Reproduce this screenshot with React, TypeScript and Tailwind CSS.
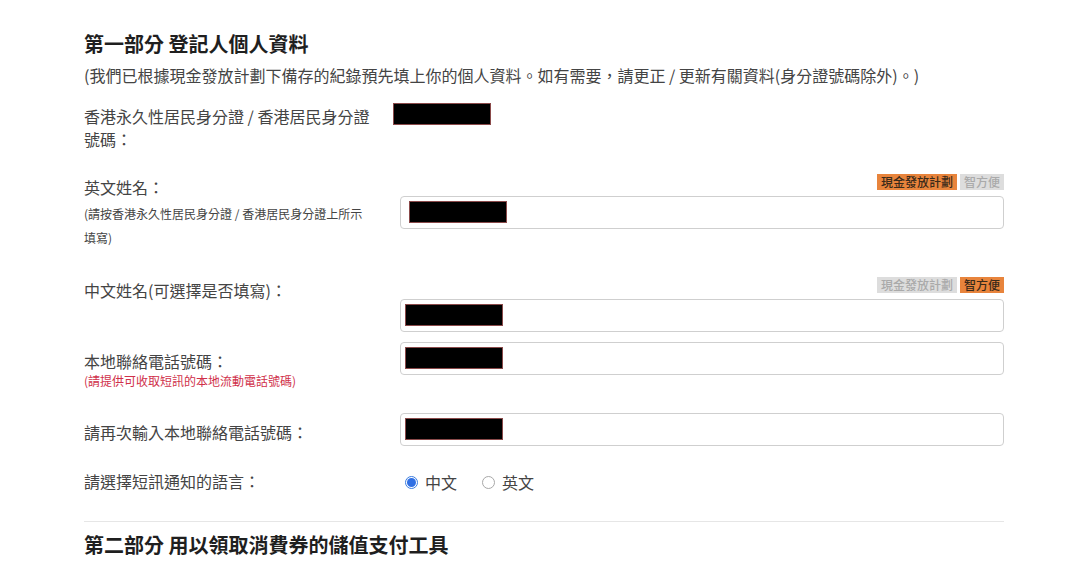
import React from "react";

const font = { fontFamily: '"Noto Sans CJK TC", "Noto Sans", sans-serif' };

function Redact({ className = "" }: { className?: string }) {
  return <div className={"h-[22px] w-[98px] bg-black border border-[#8a4a4a] " + className} />;
}

function Input({ offset = "ml-[4px]", top = "mt-[4px]" }: { offset?: string; top?: string }) {
  return (
    <div className="h-[33px] w-full rounded-[4px] border border-[#cfcfcf] bg-white">
      <Redact className={offset + " " + top} />
    </div>
  );
}

function Badges({ active }: { active: 0 | 1 }) {
  const on = "bg-[#e8843c] text-[#3a2a1a]";
  const off = "bg-[#dddddd] text-[#aaaaaa]";
  return (
    <div className="flex justify-end gap-[3px] h-[16px] mb-[6px]">
      <span className={"px-[4px] text-[12px] leading-[16px] font-medium " + (active === 0 ? on : off)}>現金發放計劃</span>
      <span className={"px-[4px] text-[12px] leading-[16px] font-medium " + (active === 1 ? on : off)}>智方便</span>
    </div>
  );
}

function Radio({ checked, label }: { checked: boolean; label: string }) {
  return (
    <div className="flex items-center gap-[7px]">
      {checked ? (
        <span className="w-[13px] h-[13px] rounded-full border border-[#3b7de0] bg-white flex items-center justify-center">
          <span className="w-[9px] h-[9px] rounded-full bg-[#2f6fe4]" />
        </span>
      ) : (
        <span className="w-[13px] h-[13px] rounded-full border border-[#a8a8a8] bg-white" />
      )}
      <span className="text-[16px] leading-[24px] text-[#444]">{label}</span>
    </div>
  );
}

export default function App() {
  return (
    <div className="min-h-[565px] bg-white" style={font}>
      <div className="w-[920px] ml-[84px] pt-[30px] text-[#444]">
        <h1 className="text-[20px] leading-[28px] font-bold text-[#1f1f1f]">第一部分 登記人個人資料</h1>
        <p className="mt-[5px] text-[16px] leading-[24px] text-[#444]">
          (我們已根據現金發放計劃下備存的紀錄預先填上你的個人資料。如有需要，請更正 / 更新有關資料(身分證號碼除外)。)
        </p>

        {/* ID row */}
        <div className="mt-[16px] flex">
          <div className="w-[309px] pt-[2px] pr-[20px] text-[16px] leading-[23px]">
            香港永久性居民身分證 / 香港居民身分證號碼：
          </div>
          <Redact />
        </div>

        {/* English name */}
        <div className="mt-[23px] flex">
          <div className="w-[316px]">
            <div className="pt-[1px] text-[16px] leading-[24px]">英文姓名：</div>
            <div className="mt-[3px] w-[284px] text-[12px] leading-[24px] text-[#444]">
              (請按香港永久性居民身分證 / 香港居民身分證上所示填寫)
            </div>
          </div>
          <div className="flex-1">
            <Badges active={0} />
            <Input offset="ml-[8px]" />
          </div>
        </div>

        {/* Chinese name */}
        <div className="mt-[27px] flex">
          <div className="w-[316px] pt-[1px] text-[16px] leading-[24px]">中文姓名(可選擇是否填寫)：</div>
          <div className="flex-1">
            <Badges active={1} />
            <Input />
          </div>
        </div>

        {/* Phone */}
        <div className="mt-[10px] flex">
          <div className="w-[316px] pt-[7px]">
            <div className="text-[16px] leading-[24px]">本地聯絡電話號碼：</div>
            <div className="text-[12px] leading-[16px] text-[#d0304a]">(請提供可收取短訊的本地流動電話號碼)</div>
          </div>
          <div className="flex-1">
            <Input />
          </div>
        </div>

        {/* Re-enter phone */}
        <div className="mt-[24px] flex">
          <div className="w-[316px] pt-[7px] text-[16px] leading-[24px]">請再次輸入本地聯絡電話號碼：</div>
          <div className="flex-1">
            <Input />
          </div>
        </div>

        {/* Language */}
        <div className="mt-[22px] flex items-center">
          <div className="w-[316px] text-[16px] leading-[24px]">請選擇短訊通知的語言：</div>
          <div className="flex-1 flex items-center gap-[25px] pl-[5px] pt-[2px]">
            <Radio checked label="中文" />
            <Radio checked={false} label="英文" />
          </div>
        </div>

        <div className="mt-[27px] h-px bg-[#e6e6e6]" />

        <h2 className="mt-[9px] text-[20px] leading-[28px] font-bold text-[#1f1f1f]">第二部分 用以領取消費券的儲值支付工具</h2>
      </div>
    </div>
  );
}
